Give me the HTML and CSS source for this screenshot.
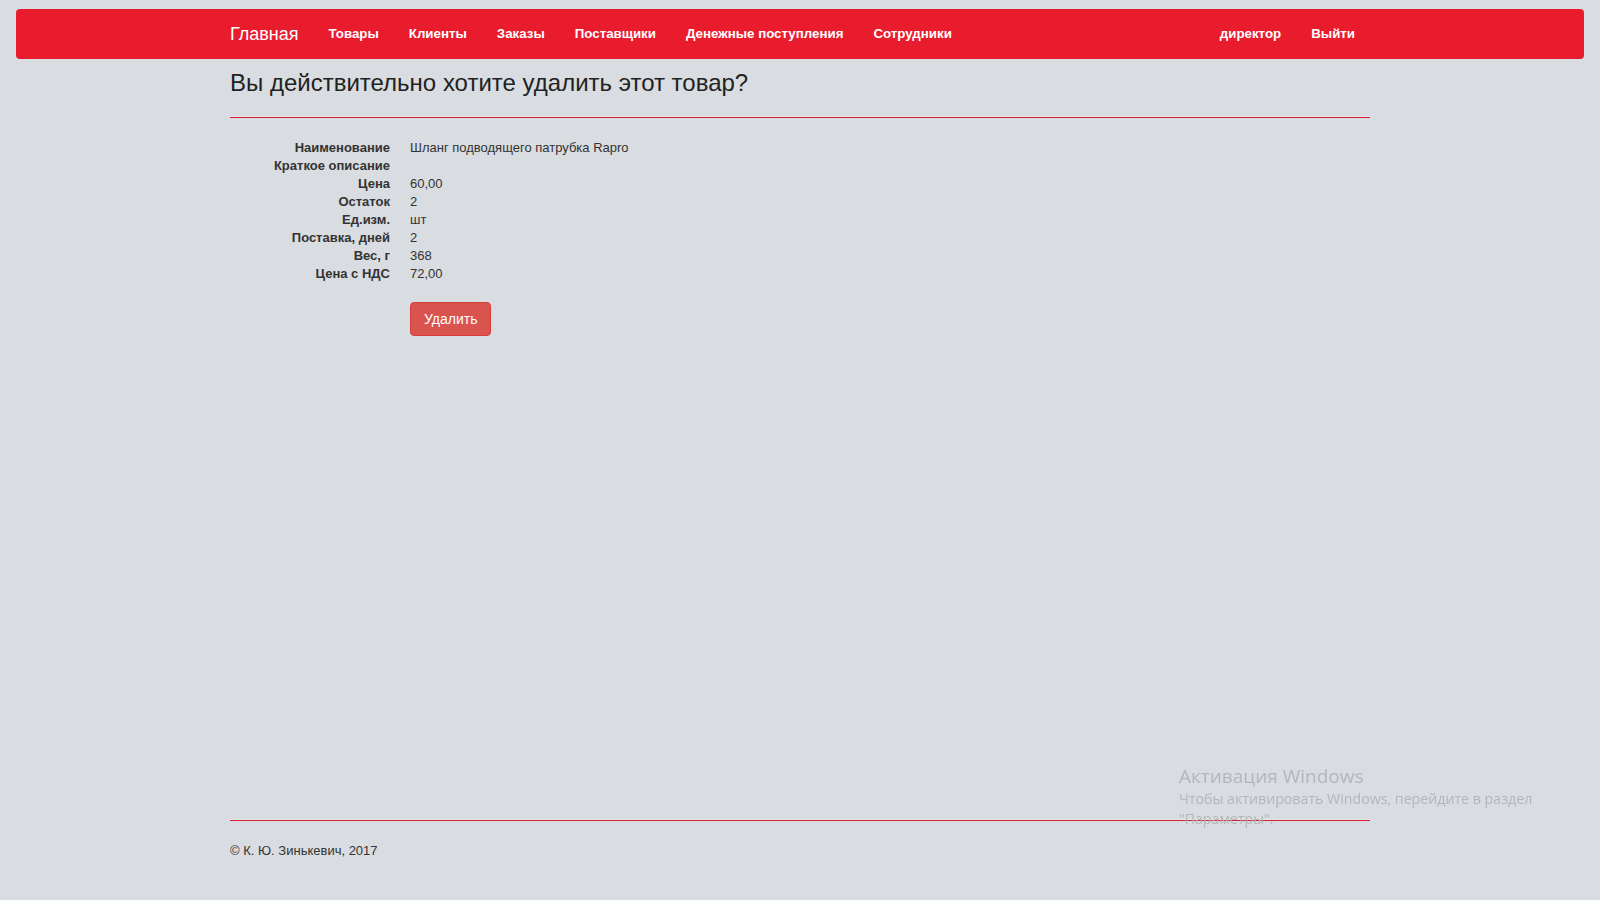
FILE: index.html
```html
<!DOCTYPE html>
<html lang="ru">
<head>
<meta charset="utf-8">
<title>Удаление товара</title>
<link rel="stylesheet" href="styles.css">
</head>
<body>
<div class="page">
  <nav class="navbar">
    <div class="container nav-inner">
      <a class="brand" href="#">Главная</a>
      <ul class="nav">
        <li><a href="#">Товары</a></li>
        <li><a href="#">Клиенты</a></li>
        <li><a href="#">Заказы</a></li>
        <li><a href="#">Поставщики</a></li>
        <li><a href="#">Денежные поступления</a></li>
        <li><a href="#">Сотрудники</a></li>
      </ul>
      <ul class="nav nav-right">
        <li><a href="#">директор</a></li>
        <li><a href="#">Выйти</a></li>
      </ul>
    </div>
  </nav>
  <main class="container body-content">
    <h2 class="title">Вы действительно хотите удалить этот товар?</h2>
    <hr class="rule">
    <dl class="details">
      <dt>Наименование</dt><dd>Шланг подводящего патрубка Rapro</dd>
      <dt>Краткое описание</dt><dd></dd>
      <dt>Цена</dt><dd>60,00</dd>
      <dt>Остаток</dt><dd>2</dd>
      <dt>Ед.изм.</dt><dd>шт</dd>
      <dt>Поставка, дней</dt><dd>2</dd>
      <dt>Вес, г</dt><dd>368</dd>
      <dt>Цена с НДС</dt><dd>72,00</dd>
    </dl>
    <form class="actions">
      <button type="button" class="btn-danger">Удалить</button>
    </form>
  </main>
  <footer class="container footer">
    <hr class="rule footer-rule">
    <p class="copy">© К. Ю. Зинькевич, 2017</p>
  </footer>
</div>
<div class="watermark">
  <div class="wm-title">Активация Windows</div>
  <div class="wm-text">Чтобы активировать Windows, перейдите в раздел<br>"Параметры".</div>
</div>
</body>
</html>
```

FILE: styles.css
```css
* { box-sizing: border-box; }
html, body { margin: 0; padding: 0; }
body {
  background: #d9dce0;
  font-family: "Liberation Sans", Arial, sans-serif;
  font-size: 13px;
  line-height: 18px;
  color: #333;
  height: 900px;
  overflow: hidden;
}
.page {
  display: flex;
  flex-direction: column;
  height: 900px;
}
.container {
  width: 1170px;
  padding: 0 15px;
  margin: 0 auto;
}
.navbar {
  margin: 9px 16px 0;
  height: 50px;
  background: #e91c2e;
  border-radius: 4px;
}
.navbar .container {
  height: 50px;
}
.nav-inner {
  display: flex;
  align-items: center;
}
.brand {
  color: #fff;
  text-decoration: none;
  font-size: 18px;
  line-height: 20px;
  padding: 15px 15px;
  margin-left: -15px;
}
.nav {
  display: flex;
  list-style: none;
  margin: 0;
  padding: 0;
}
.nav a {
  display: block;
  color: #fff;
  text-decoration: none;
  font-size: 13.3px;
  font-weight: bold;
  line-height: 20px;
  padding: 15px 15px;
}
.nav-right {
  margin-left: auto;
}
.body-content {
  flex: 1;
}
.title {
  margin: 11px 0 0;
  font-size: 24px;
  font-weight: normal;
  line-height: 1.1;
  color: #222;
}
.rule {
  margin: 20px 0 0;
  height: 0;
  border: 0;
  border-top: 1px solid #e6e7ea;
  border-bottom: 1px solid #d4202f;
}
.details {
  display: grid;
  grid-template-columns: 160px 1fr;
  column-gap: 20px;
  margin: 21px 0 19px;
}
.details dt {
  text-align: right;
  font-weight: bold;
  color: #333;
  min-height: 18px;
}
.details dd {
  margin: 0;
  color: #333;
  min-height: 18px;
}
.actions {
  margin: 0;
  padding-left: 180px;
}
.btn-danger {
  height: 34px;
  padding: 6px 13px;
  font-family: "Liberation Sans", Arial, sans-serif;
  font-size: 14px;
  line-height: 20px;
  color: #fff;
  background: #d9534f;
  border: 1px solid #d43f3a;
  border-radius: 4px;
}
.footer {
  padding-bottom: 40px;
}
.footer-rule {
  margin: 0 0 21px;
}
.copy {
  margin: 0;
  font-size: 13px;
  line-height: 18px;
  color: #333;
}
.watermark {
  position: fixed;
  left: 1179px;
  top: 764px;
  font-family: "Open Sans", "Noto Sans", sans-serif;
  color: #b3b6ba;
}
.wm-title {
  font-size: 19px;
  line-height: 25px;
}
.wm-text {
  font-size: 14.2px;
  line-height: 20px;
}
```
